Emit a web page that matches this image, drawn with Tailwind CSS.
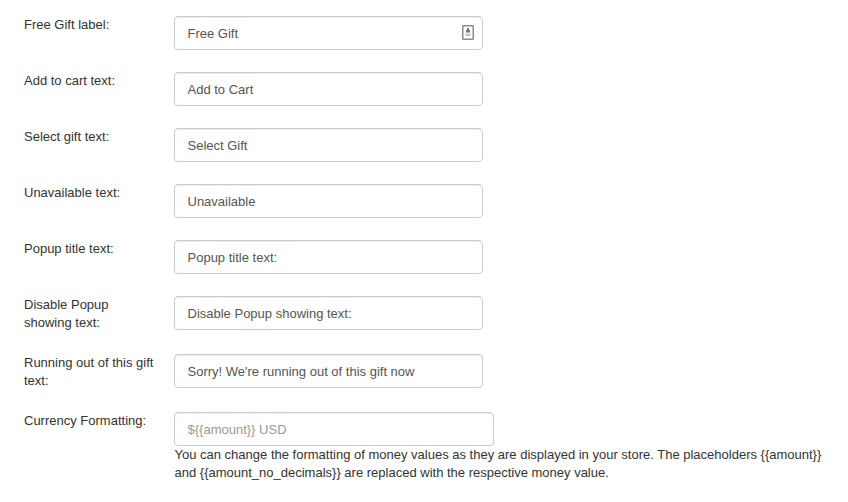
<!DOCTYPE html>
<html lang="en"><head><meta charset="utf-8"><title>Gift settings</title>
<script src="https://cdn.jsdelivr.net/npm/@tailwindcss/browser@4"></script></head>
<body class="bg-white font-['Liberation_Sans',Arial,sans-serif] text-[13px] leading-[18px] text-[#333]">
<form class="flex flex-col gap-[22px] pl-6 pt-4">
<div class="flex"><label for="f1" class="w-[150px] shrink-0 pr-4">Free Gift label:</label><div class="relative"><input id="f1" class="block h-[34px] w-[309px] rounded border border-[#ccc] px-[12.5px] text-[#555] shadow-[inset_0_1px_1px_rgba(0,0,0,0.075)]" value="Free Gift">
<svg class="absolute left-[288px] top-[9px]" width="12" height="15" viewBox="0 0 12 15"><rect x=".75" y=".75" width="10.5" height="13.5" rx=".5" fill="#fff" stroke="#8c8c8c" stroke-width="1.5"/><path d="M5 3h2v1.500l1 1V7.500H4V5.500l1-1z" fill="#777"/><path d="M3.500 8.500h5v2.500h-5z" fill="#c4c4c4"/></svg></div></div>
<div class="flex"><label for="f2" class="w-[150px] shrink-0 pr-4">Add to cart text:</label><input id="f2" class="block h-[34px] w-[309px] rounded border border-[#ccc] px-[12.5px] text-[#555] shadow-[inset_0_1px_1px_rgba(0,0,0,0.075)]" value="Add to Cart"></div>
<div class="flex"><label for="f3" class="w-[150px] shrink-0 pr-4">Select gift text:</label><input id="f3" class="block h-[34px] w-[309px] rounded border border-[#ccc] px-[12.5px] text-[#555] shadow-[inset_0_1px_1px_rgba(0,0,0,0.075)]" value="Select Gift"></div>
<div class="flex"><label for="f4" class="w-[150px] shrink-0 pr-4">Unavailable text:</label><input id="f4" class="block h-[34px] w-[309px] rounded border border-[#ccc] px-[12.5px] text-[#555] shadow-[inset_0_1px_1px_rgba(0,0,0,0.075)]" value="Unavailable"></div>
<div class="flex"><label for="f5" class="w-[150px] shrink-0 pr-4">Popup title text:</label><input id="f5" class="block h-[34px] w-[309px] rounded border border-[#ccc] px-[12.5px] text-[#555] shadow-[inset_0_1px_1px_rgba(0,0,0,0.075)]" value="Popup title text:"></div>
<div class="flex"><label for="f6" class="w-[150px] shrink-0 pr-4">Disable Popup<br>showing text:</label><input id="f6" class="block h-[34px] w-[309px] rounded border border-[#ccc] px-[12.5px] text-[#555] shadow-[inset_0_1px_1px_rgba(0,0,0,0.075)]" value="Disable Popup showing text:"></div>
<div class="flex"><label for="f7" class="w-[150px] shrink-0 pr-4">Running out of this gift<br>text:</label><input id="f7" class="block h-[34px] w-[309px] rounded border border-[#ccc] px-[12.5px] text-[#555] shadow-[inset_0_1px_1px_rgba(0,0,0,0.075)]" value="Sorry! We're running out of this gift now"></div>
<div class="flex"><label for="f8" class="w-[150px] shrink-0 pr-4">Currency Formatting:</label><div><input id="f8" class="block h-[34px] w-[320px] rounded border border-[#ccc] px-[12.5px] shadow-[inset_0_1px_1px_rgba(0,0,0,0.075)] placeholder:text-[#999]" placeholder="${{amount}} USD"><p class="whitespace-nowrap pl-[0.5px]">You can change the formatting of money values as they are displayed in your store. The placeholders {{amount}}<br>and {{amount_no_decimals}} are replaced with the respective money value.</p></div></div>
</form></body></html>
